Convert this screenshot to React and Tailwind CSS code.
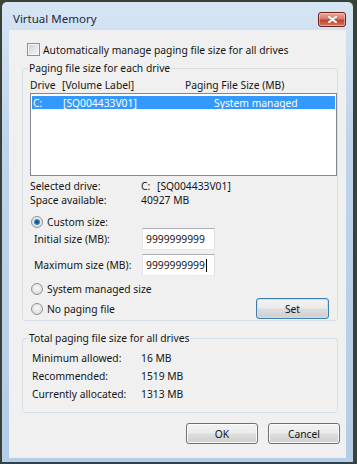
import React from 'react'

const btnClass =
  'flex items-center justify-center rounded-[3px] border bg-[linear-gradient(#f3f3f3_0%,#ebebeb_48%,#dddddd_52%,#cfcfcf_100%)] text-[10.3px] leading-[14px]'

function Checkbox() {
  return (
    <span className="block h-[13px] w-[13px] shrink-0 border border-[#8e8f8f] bg-[linear-gradient(135deg,#cdd1d7,#f6f6f6)] shadow-[inset_0_0_0_1px_#f4f4f4]" />
  )
}

function Radio({ checked }) {
  return (
    <span className="flex h-[12px] w-[12px] shrink-0 items-center justify-center rounded-full border border-[#8f9296] bg-[radial-gradient(circle_at_50%_40%,#fafafa,#d2d4d6)]">
      {checked && (
        <span className="block h-[6px] w-[6px] rounded-full bg-[radial-gradient(circle,#123f66_0%,#2a79b5_55%,#86cdf2_100%)]" />
      )}
    </span>
  )
}

function EditBox({ value, caret }) {
  return (
    <div className="flex h-[22px] w-[73px] items-center border border-[#abadb3] border-l-[#e2e3ea] border-r-[#dbdfe6] border-b-[#e3e9ef] bg-white pl-[3px]">
      <span>{value}</span>
      {caret && <span className="ml-px block h-[13px] w-px bg-black" />}
    </div>
  )
}

function InfoRow({ label, value }) {
  return (
    <div className="flex h-[14px] items-center">
      <span className="w-[111px] pl-[2px]">{label}</span>
      <span>{value}</span>
    </div>
  )
}

export default function App() {
  return (
    <div className="h-[464px] w-[357px] overflow-hidden bg-[#3a4236] pl-px pt-px font-['Noto_Sans',sans-serif] text-[10.3px] leading-[14px] text-[#151515]">
      <div className="flex h-[462px] w-[353px] flex-col rounded-t-[6px] border border-[#34404e] bg-[linear-gradient(#d6e5f4,#bfd4ea_30%,#b4cde8)] px-[7px] pb-[4px]">
        {/* title bar */}
        <div className="flex h-[28px] shrink-0 items-start justify-between">
          <span className="ml-[4px] mt-[9px] text-[11.5px] leading-[16px] text-[#1c2a3d]">Virtual Memory</span>
          <div className="mt-[10px] flex h-[15px] w-[28px] items-center justify-center rounded-[3px] border border-[#6d2219] bg-[linear-gradient(#eaa99b_0%,#d87a68_45%,#c2412e_55%,#cf7a5f_100%)] shadow-[inset_0_0_0_1px_rgba(255,220,210,0.5)]">
            <svg width="9" height="7" viewBox="0 0 9 7">
              <path d="M1 0.8 L8 6.2 M8 0.8 L1 6.2" stroke="#fff" strokeWidth="2" strokeLinecap="round" />
            </svg>
          </div>
        </div>

        {/* client area */}
        <div className="flex flex-1 flex-col bg-[#f0f0f0]">
          <div className="ml-[18px] mt-[13px] flex h-[13px] items-center gap-[3px]">
            <Checkbox />
            <span>Automatically manage paging file size for all drives</span>
          </div>

          <fieldset className="ml-[13px] mt-[5px] w-[316px] rounded-[3px] border border-[#d5dfe5] pb-[1px] pl-[5px] pr-0">
            <legend className="px-px leading-[14px]">Paging file size for each drive</legend>
            <div className="pl-[2px] pt-[3px]">
              <div className="flex h-[14px] items-center">
                <span className="w-[32px]">Drive</span>
                <span className="w-[123px]">[Volume Label]</span>
                <span>Paging File Size (MB)</span>
              </div>
              <div className="mt-px h-[83px] border border-[#828790] bg-white px-px pt-[2px]">
                <div className="flex h-[13px] items-center bg-[#3399ff] text-white">
                  <span className="w-[31px] pl-px">C:</span>
                  <span className="w-[151px]">[SQ004433V01]</span>
                  <span>System managed</span>
                </div>
              </div>

              <div className="mt-[3px] flex h-[14px] items-center">
                <span className="w-[111px]">Selected drive:</span>
                <span className="w-[16px]">C:</span>
                <span>[SQ004433V01]</span>
              </div>
              <div className="flex h-[14px] items-center">
                <span className="w-[111px]">Space available:</span>
                <span>40927 MB</span>
              </div>

              <div className="ml-px mt-[8px] flex h-[13px] items-center gap-[4px]">
                <Radio checked />
                <span>Custom size:</span>
              </div>
              <div className="flex h-[22px] items-center">
                <span className="w-[112px] pl-[4px]">Initial size (MB):</span>
                <EditBox value="9999999999" />
              </div>
              <div className="mt-[4px] flex h-[22px] items-center">
                <span className="w-[112px] pl-[4px]">Maximum size (MB):</span>
                <EditBox value="9999999999" caret />
              </div>

              <div className="ml-px mt-[6px] flex h-[14px] items-center gap-[4px]">
                <Radio />
                <span>System managed size</span>
              </div>
              <div className="mt-[2px] flex h-[21px] items-center">
                <div className="ml-px flex items-center gap-[4px]">
                  <Radio />
                  <span>No paging file</span>
                </div>
                <button className={btnClass + ' ml-auto mr-[8px] h-[21px] w-[73px] border-[#3c7fb1] shadow-[inset_0_0_0_1px_#bfe3f7]'}>
                  Set
                </button>
              </div>
            </div>
          </fieldset>

          <fieldset className="ml-[13px] mt-[10px] w-[316px] rounded-[3px] border border-[#d5dfe5] pb-[11px] pl-[5px] pr-0">
            <legend className="px-px leading-[14px]">Total paging file size for all drives</legend>
            <div className="flex flex-col gap-[4px] pl-[2px] pt-[6px]">
              <InfoRow label="Minimum allowed:" value="16 MB" />
              <InfoRow label="Recommended:" value="1519 MB" />
              <InfoRow label="Currently allocated:" value="1313 MB" />
            </div>
          </fieldset>

          <div className="mt-[10px] flex justify-end gap-[10px] pr-[6px]">
            <button className={btnClass + ' h-[21px] w-[72px] border-[#707070] shadow-[inset_0_0_0_1px_#fbfbfb]'}>OK</button>
            <button className={btnClass + ' h-[21px] w-[72px] border-[#707070] shadow-[inset_0_0_0_1px_#fbfbfb]'}>Cancel</button>
          </div>
        </div>
      </div>
    </div>
  )
}
